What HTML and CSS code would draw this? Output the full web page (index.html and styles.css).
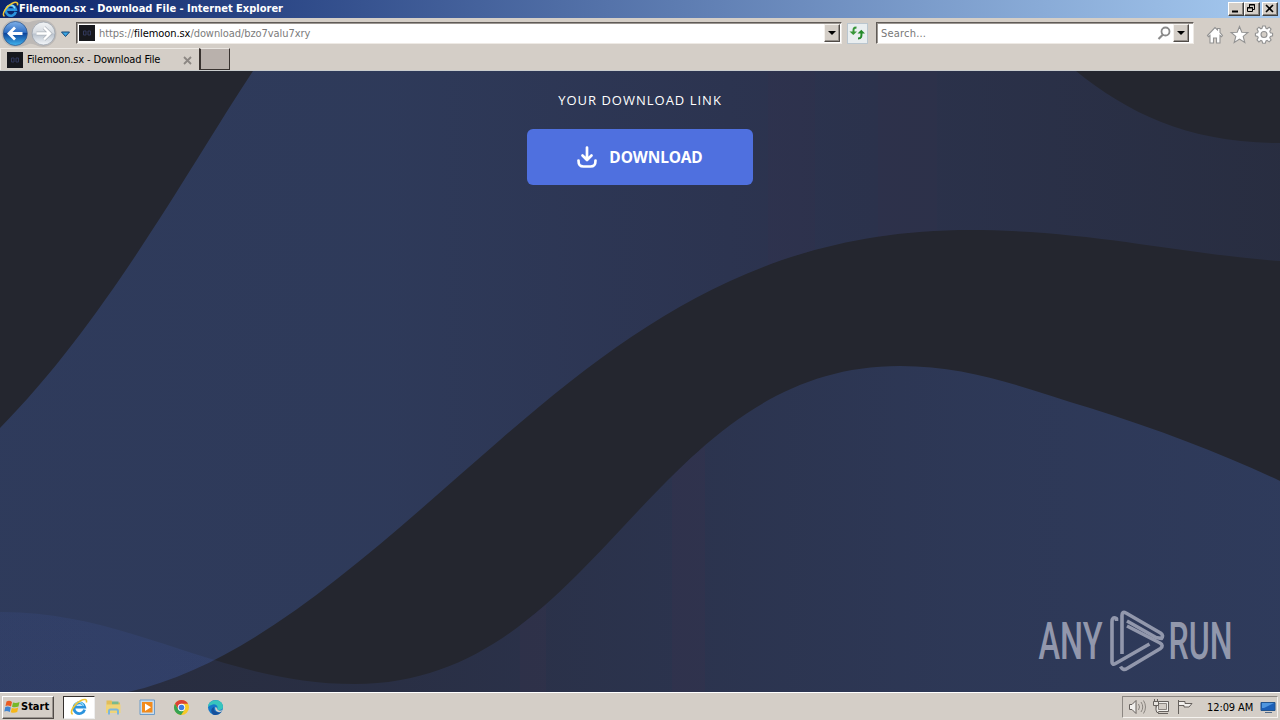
FILE: index.html
```html
<!DOCTYPE html>
<html lang="en">
<head>
<meta charset="utf-8">
<title>Filemoon.sx - Download File</title>
<link rel="stylesheet" href="styles.css">
</head>
<body>
<svg class="defs" width="0" height="0">
  <defs>
    <linearGradient id="blueBall" x1="0" y1="0" x2="0" y2="1"><stop offset="0" stop-color="#7fb0e8"/><stop offset=".45" stop-color="#2f6fc4"/><stop offset=".5" stop-color="#0d459c"/><stop offset="1" stop-color="#42b5ef"/></linearGradient>
    <linearGradient id="greyBall" x1="0" y1="0" x2="0" y2="1"><stop offset="0" stop-color="#f2f4f6"/><stop offset=".48" stop-color="#d5dae0"/><stop offset=".52" stop-color="#b9c2cd"/><stop offset="1" stop-color="#f5f8fb"/></linearGradient>
    <symbol id="ie" viewBox="0 0 18 18">
      <path d="M14.6 11.6A5.4 5.4 0 1 1 14.7 9.200H5.400" fill="none" stroke="#2b93dd" stroke-width="2.800"/>
      <path d="M13.5 7.8A4.5 4.5 0 0 0 5 7" fill="none" stroke="#8fdcfa" stroke-width="1.4"/>
      <path d="M2.6 16.3C-.8 14 4.600 5.600 10.500 2.700 14.500.700 17.400.900 16.300 4.600" fill="none" stroke="#f0c535" stroke-width="1.6"/>
    </symbol>
  </defs>
</svg>
<header class="titlebar">
  <svg class="title-icon" width="17" height="17"><use href="#ie"/></svg>
  <span class="title-text">Filemoon.sx - Download File - Internet Explorer</span>
  <div class="window-buttons">
    <span class="wbtn"><svg width="13" height="11"><path d="M3 8.500h6" stroke="#000" stroke-width="2"/></svg></span>
    <span class="wbtn"><svg width="13" height="11"><path d="M4.500 4V1.500h5v5H8M4 2h6" fill="none" stroke="#000"/><path d="M2.500 4.500h5v4h-5zM2 5h6" fill="none" stroke="#000"/></svg></span>
    <span class="wbtn close"><svg width="13" height="11"><path d="M3 2l7 7M10 2L3 9" stroke="#000" stroke-width="1.600"/></svg></span>
  </div>
</header>
<nav class="navbar">
  <svg class="history" width="76" height="30" viewBox="0 18 76 30">
    <path d="M15 20C22 20 24 23 30 22C36 20 39 20 43 20A13.500 13.500 0 0 1 43 47C37 47 34 43 29 44C25 46 20 47 15 47A13.500 13.500 0 0 1 15 20" fill="#bdb9b6"/>
    <circle cx="15.300" cy="33.500" r="12" fill="url(#blueBall)" stroke="#315b91" stroke-width=".8"/>
    <path d="M22.500 33.500H9.500M15 27.500l-6 6 6 6" fill="none" stroke="#fff" stroke-width="2.800"/>
    <circle cx="43.500" cy="33.500" r="11.500" fill="url(#greyBall)" stroke="#9aa2ac" stroke-width=".8"/>
    <path d="M36.500 33.500h13M44 27.500l6 6-6 6" fill="none" stroke="#aeb4bb" stroke-width="3.800"/>
    <path d="M36.500 33.500h13M44 27.500l6 6-6 6" fill="none" stroke="#fff" stroke-width="2.400"/>
    <path d="M61.500 32h8l-4 4.500z" fill="#39a5e3" stroke="#164879"/>
  </svg>
  <div class="field address">
    <span class="favicon"><svg width="16" height="16"><path d="M4.500 6h2.500v4H4.500zM9 6h2.500v4H9z" fill="none" stroke="#32395c"/></svg></span>
    <span class="url">https://<b>filemoon.sx</b>/download/bzo7valu7xry</span>
    <span class="drop"><svg width="12" height="14"><path d="M2 5h8L6 9z"/></svg></span>
  </div>
  <span class="refresh"><svg width="19" height="19"><path d="M8.500 3.500C5 3.500 5.500 5 5.500 9" fill="none" stroke="#389638" stroke-width="2"/><path d="M1.500 7.500h7.500L5.300 11z" fill="#389638"/><path d="M10 14.500c3.500 0 3.500-1.500 3.500-6" fill="none" stroke="#258b2b" stroke-width="2"/><path d="M9.500 9.500H17L13.300 5.700z" fill="#258b2b"/></svg></span>
  <div class="field search">
    <span class="placeholder">Search...</span>
    <svg width="14" height="15"><circle cx="8.500" cy="5.500" r="4" fill="none" stroke="#8a8a8a" stroke-width="1.800"/><path d="M6 8.500L1.500 13" stroke="#8a8a8a" stroke-width="2.200"/></svg>
    <span class="drop"><svg width="12" height="14"><path d="M2 5h8L6 9z"/></svg></span>
  </div>
  <svg class="tools" width="72" height="22" viewBox="0 0 72 22" fill="#fff" stroke="#929292" stroke-width="1.100">
    <path d="M1.500 11.500L9 3.500l2.500 2.500V4.500h2.500v4l2.500 3-1 1.200-1.500-1.200v7.500H10.500v-5h-3v5H4v-7.500l-1.500 1.200z"/>
    <path d="M33.500 2.500l2.300 5.700 6.100.3-4.700 3.900 1.600 6.100-5.300-3.400-5.300 3.400 1.600-6.100-4.700-3.900 6.100-.3z"/>
    <g transform="translate(-4 0)"><path d="M56.900 3.200l2 1.600 1.100-.5.700-2.300h2.600l.7 2.300 1.100.5 2.100-1.600 1.900 1.900-1.300 2.200.6 1.400 2.200.6v2.500l-2.200.6-.6 1.400 1.300 2.200-1.900 1.900-2.100-1.500-1.100.5-.7 2.300h-2.600l-.7-2.300-1.100-.5-2 1.500-1.900-1.900 1.200-2.200-.5-1.400-2.300-.6V9.300l2.300-.6.500-1.400L55 5.100z"/>
    <circle cx="62" cy="10.500" r="3" fill="#d4cec7"/></g>
  </svg>
</nav>
<div class="tabs">
  <div class="tab">
    <span class="favicon"><svg width="16" height="16"><path d="M4.500 6h2.500v4H4.500zM9 6h2.500v4H9z" fill="none" stroke="#32395c"/></svg></span>
    <span class="tab-text">Filemoon.sx - Download File</span>
    <svg class="tab-close" width="9" height="9"><path d="M1 1l7 7M8 1L1 8" stroke="#8c8783" stroke-width="1.800"/></svg>
  </div>
  <div class="new-tab"></div>
</div>
<main class="page">
  <svg class="waves" width="1280" height="621" viewBox="0 71 1280 621">
    <defs>
      <linearGradient id="upper"><stop offset="0" stop-color="#4d76da" stop-opacity=".26"/><stop offset=".3" stop-color="#4d76da" stop-opacity=".25"/><stop offset=".6" stop-color="#4f70e0" stop-opacity=".18"/><stop offset="1" stop-color="#4f70e0" stop-opacity=".1"/></linearGradient>
      <linearGradient id="lower"><stop offset="0" stop-color="#4f70e0" stop-opacity=".08"/><stop offset=".3" stop-color="#4f70e0" stop-opacity=".12"/><stop offset=".75" stop-color="#4d74da" stop-opacity=".23"/><stop offset="1" stop-color="#4d76da" stop-opacity=".26"/></linearGradient>
      <clipPath id="upperClip"><path id="upperPath" d="M253 71C187 171 105 322 0 428V692H128C255 663 370 553 500 440C640 318 770 230 970 230C1090 230 1180 254 1280 261V143C1190 143 1129 114 1076 71Z"/></clipPath>
      <clipPath id="lowerClip"><path id="lowerPath" d="M0 612C129 611 221 684 355 684C599 684 649 366 900 366C970 366 1024 388 1090 408C1160 430 1225 455 1280 481V692H0Z"/></clipPath>
    </defs>
    <use href="#upperPath" fill="url(#upper)"/>
    <use href="#lowerPath" fill="url(#lower)"/>
    <g clip-path="url(#upperClip)" fill="#44304c" opacity=".12"><path d="M768 71h47v621h-47zM878 71h59v621h-59z"/></g>
    <g clip-path="url(#lowerClip)" fill="#44304c" opacity=".18"><path d="M520 71h26v621h-26zM672 71h33v621h-33z"/></g>
  </svg>
  <section class="download">
    <p class="caption">YOUR DOWNLOAD LINK</p>
    <a class="button">
      <svg width="20" height="22" fill="none" stroke="#fff" stroke-width="2.700" stroke-linecap="round" stroke-linejoin="round"><path d="M10 1.500v12M5.500 9.500l4.500 4.500 4.500-4.500M1.500 14.500c0 4.500 1 6 5 6h7c4 0 5-1.500 5-6"/></svg>
      <span>DOWNLOAD</span>
    </a>
  </section>
  <svg class="watermark" width="255" height="80" viewBox="1025 600 255 80">
    <g class="brand"><text x="1038.500" y="659" textLength="64" lengthAdjust="spacingAndGlyphs">ANY</text><text x="1168.500" y="659" textLength="64" lengthAdjust="spacingAndGlyphs">RUN</text></g>
    <g fill="none" stroke="#a0a5b8" stroke-width="3.600" stroke-linejoin="round" opacity=".88">
      <path d="M1122 654V615.500Q1122 611 1126 613L1160.500 633Q1164 635.500 1161.500 638.500L1156 637.500L1127 621"/>
      <path d="M1116.500 621V618.500Q1112 616 1112 622V662Q1112 665.500 1115.500 663.500L1149.500 644"/>
      <path d="M1120.500 666.500Q1123 671 1127 668.500L1160.500 648.500Q1164 645.500 1160 643L1127 626"/>
    </g>
  </svg>
</main>
<footer class="taskbar">
  <div class="start"><svg width="17" height="16"><path d="M2.500 2.500Q5.500 1 8 3L7 7.500Q4 6 1.500 7z" fill="#e95b22"/><path d="M9 3.500Q12 4.500 15.500 3L14.500 7.500Q11 9 8 7.800z" fill="#76b82a"/><path d="M1.300 8Q4 7 6.800 8.500L5.800 13Q3 11.500.3 12.500z" fill="#3f84d1"/><path d="M7.800 9Q11 10 14.200 8.500L13.200 13Q10 14.500 6.800 13.300z" fill="#f6b719"/></svg><span>Start</span></div>
  <div class="launch">
    <span class="app active"><svg width="18" height="18"><use href="#ie"/></svg></span>
    <span class="app"><svg width="17" height="17"><path d="M1.500 1.500h5l1 2h7.500v10h-13.500z" fill="#e2bd58"/><path d="M7 2.500h6.500v3H7z" fill="#79b98c"/><path d="M1 5.500h14.500v8.500H1z" fill="#f0d478"/><path d="M4 15.500V12q0-1.500 1.500-1.500h6q1.500 0 1.500 1.500v3.500" fill="none" stroke="#7db6db" stroke-width="2"/></svg></span>
    <span class="app"><svg width="17" height="17"><path d="M1 1h14.500v14.500H1z" fill="#c9dcec" stroke="#6d9cc9"/><path d="M3 3h10.500v10.500H3z" fill="#f28b1c"/><path d="M6 4.500l6 3.800-6 3.700z" fill="#fff"/></svg></span>
    <span class="app"><svg width="17" height="17" viewBox="0 0 17 17"><circle cx="8.500" cy="8.500" r="7.500" fill="#f7c928"/><path d="M2 4.800A7.500 7.500 0 0 1 15 4.800H8.500L5.200 10.500z" fill="#dc4135"/><path d="M2 4.800A7.500 7.500 0 0 0 8 16l3.700-5.600H5.300z" fill="#36a352"/><circle cx="8.500" cy="8.500" r="3.700" fill="#fff"/><circle cx="8.500" cy="8.500" r="2.800" fill="#3f7ce0"/></svg></span>
    <span class="app"><svg width="17" height="17"><circle cx="8.500" cy="8.500" r="7.500" fill="#1678c9"/><path d="M1 8C1-.5 16-1.500 16 8c0 3.500-5 3.500-6 2 2-3-2-6-5.500-4Q2 6.500 1 8" fill="#37c5bd"/><path d="M7 8c-1 4 3 6.500 7.500 5Q11 17 6.500 15.700C3 13 4 9 7 8" fill="#164f9b"/><path d="M8 8.500q2-1 2 1.500 2 3 5.500 1-1 1.500-2 2-5 1-5.500-4.500" fill="#d4cec7"/></svg></span>
  </div>
  <div class="tray">
    <svg width="66" height="18" viewBox="1128 698 66 18" fill="#f2f0ed" stroke="#66615d">
      <path d="M1129.500 704.500h2.500l4-4v13l-4-4h-2.500z"/><path d="M1138.500 704q2 3 0 6M1141 702q3.500 5 0 10M1143.500 700.500q4 6.500 0 13" fill="none" stroke="#8a8580"/>
      <path d="M1156.500 701.500h12v10h-12z"/><path d="M1158.500 703.500h8v6h-8z" fill="#d4cec7" stroke="#8a8580"/><path d="M1158 713.500h10" fill="none"/><path d="M1153.500 701.500h5v4h-5zM1154.500 699v2M1157.500 699v2M1156 706v4q0 3 3 3" fill="#e8e5e0"/>
      <path d="M1178.500 700v14M1179 701.500h6v2h7l-3 3.500h-5v-1.500h-5"/>
    </svg>
    <span class="clock">12:09 AM</span>
    <svg class="desk" width="16" height="15"><path d="M1 2.500h14v8H1z" fill="#1c5fb7" stroke="#23558f"/><path d="M2 3h12L4 8H2z" fill="#4f96df"/><path d="M5 12.500h7" stroke="#516986"/></svg>
  </div>
</footer>
</body>
</html>
```
FILE: styles.css
```css
* { box-sizing: border-box; }
html, body { margin: 0; height: 100%; overflow: hidden; }
body { display: flex; flex-direction: column; width: 1280px; height: 720px; background: #d4cec7; font-family: "DejaVu Sans Condensed", "DejaVu Sans", sans-serif; font-stretch: condensed; font-size: 11px; line-height: 14px; color: #000; }
svg { display: block; flex: none; }
.defs { position: absolute; }
span { white-space: nowrap; }
.titlebar { flex: none; height: 18px; display: flex; align-items: center; padding: 0 2px; background: linear-gradient(90deg, #0b246a, #a6caf0); }
.title-text { color: #fff; font-weight: bold; }
.window-buttons { margin-left: auto; display: flex; }
.wbtn { width: 16px; height: 14px; background: #d4cec7; border: 1px solid; border-color: #fff #404040 #404040 #fff; box-shadow: inset -1px -1px #85817c; }
.close { margin-left: 2px; }
.navbar { flex: none; height: 30px; display: flex; align-items: flex-start; }
.field { height: 22px; margin-top: 4px; display: flex; align-items: center; background: #fff; border: 1px solid; border-color: #605b57 #eeeae5 #eeeae5 #605b57; box-shadow: inset 1px 1px #9b9691; }
.address { width: 766px; padding: 0 1px 0 2px; }
.favicon { width: 16px; height: 16px; background: #17181d; flex: none; }
.url { margin-left: 4px; padding-top: 2px; color: #7b7b7b; letter-spacing: -.07px; }
.url b { font-weight: normal; color: #000; }
.drop { width: 16px; height: 18px; margin-left: auto; padding: 1px; background: #d4cec7; border: 1px solid; border-color: #f4f1ed #504b47 #504b47 #f4f1ed; box-shadow: inset -1px -1px #96918c; }
.refresh { width: 21px; height: 21px; margin: 5px 8px 0 5px; border: 1px solid #bac6cf; background: #e9eef0; }
.search { width: 318px; padding-left: 4px; padding-right: 4px; }
.placeholder { flex: 1; padding-top: 2px; color: #777; letter-spacing: .2px; }
.search .drop { margin-left: 2px; }
.tools { margin: 6px 0 0 12px; }
.tabs { flex: none; height: 23px; display: flex; border-bottom: 1px solid #c9cccd; }
.tab { width: 199px; display: flex; align-items: center; padding: 1px 7px 0; border-top: 1px solid #eeeae5; border-left: 1px solid #eeeae5; padding-left: 6px; }
.tab-text { margin-left: 4px; letter-spacing: -.15px; }
.tab-close { margin-left: auto; }
.new-tab { width: 31px; height: 22px; background: #b9b1ac; border: 1px solid; border-color: #e9e5e0 #38322f #38322f #38322f; border-left-width: 2px; }
.page { flex: none; position: relative; height: 621px; background: #24262f; overflow: hidden; font-family: "Open Sans", "Noto Sans", sans-serif; font-stretch: normal; }
.waves { position: absolute; inset: 0; }
.download { position: relative; display: flex; flex-direction: column; align-items: center; padding-top: 19px; }
.caption { margin: 0; font-size: 13px; line-height: 20px; letter-spacing: 1px; color: #fff; }
.button { display: flex; align-items: center; justify-content: center; gap: 12px; width: 226px; height: 56px; margin-top: 19px; background: #4f70df; border-radius: 6px; color: #fff; font-family: "Noto Sans", "Open Sans", sans-serif; font-size: 15.500px; font-weight: 700; }
.watermark { position: absolute; right: 0; bottom: 12px; }
.brand { font-family: Roboto, sans-serif; font-size: 51.500px; font-weight: 500; fill: #a0a5b8; opacity: .88; }
.taskbar { flex: none; height: 28px; display: flex; align-items: center; background: #d4cec7; border-top: 1px solid #fff; padding: 1px 2px 0; }
.start { width: 52px; height: 23px; display: flex; align-items: center; padding-left: 1px; border: 1px solid; border-color: #fff #504b47 #504b47 #fff; box-shadow: inset -1px -1px #99948f; font-weight: bold; }
.launch { display: flex; margin-left: 9px; gap: 2px; }
.app { width: 32px; height: 23px; display: flex; align-items: center; justify-content: center; }
.active { background: #fff; border: 1px solid; border-color: #35302d #eee #eee #35302d; }
.tray { margin-left: auto; height: 22px; width: 156px; display: flex; align-items: center; padding-left: 5px; border: 1px solid; border-color: #8c8782 #f5f2ee #f5f2ee #8c8782; }
.clock { margin-left: 13px; padding-top: 1px; letter-spacing: -.1px; }
.desk { margin-left: 7px; }
```
